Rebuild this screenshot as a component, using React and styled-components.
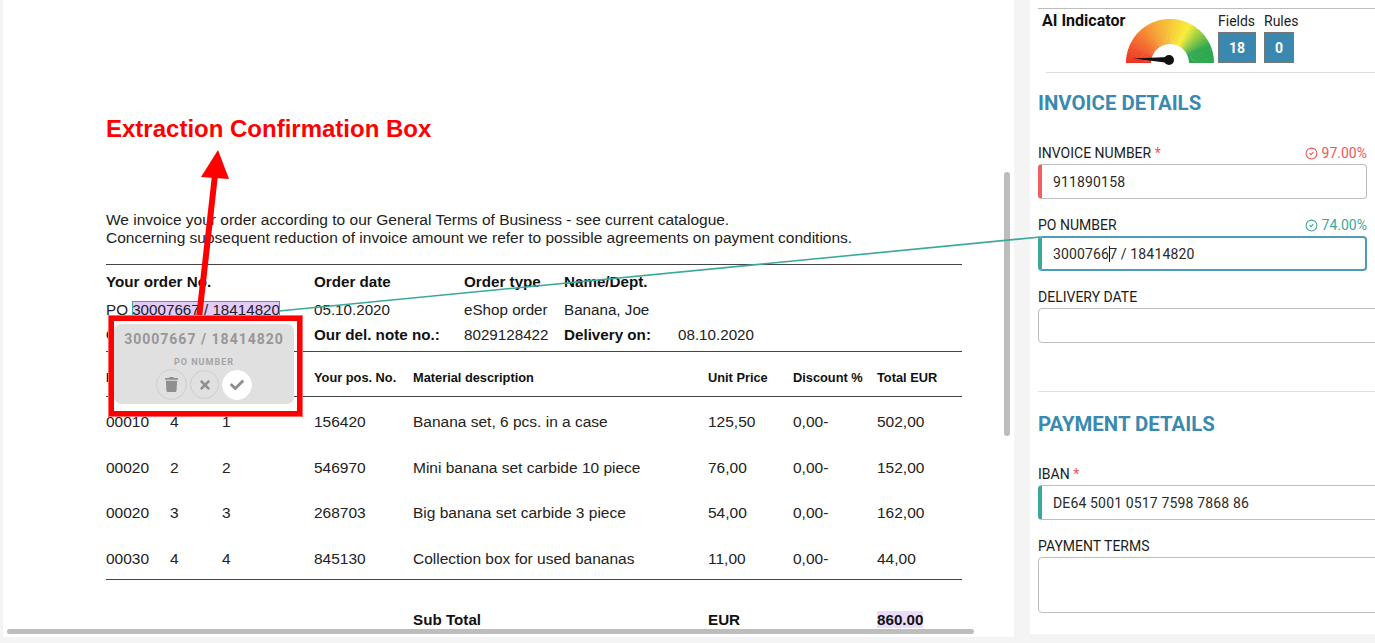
import React from "react";
import styled, { createGlobalStyle } from "styled-components";
import { CircleCheck } from "lucide-react";
import { FaCheck, FaTimes, FaTrash } from "react-icons/fa";

const GlobalStyle = createGlobalStyle`
  html, body {
    margin: 0;
    padding: 0;
    background: #f4f4f4;
    overflow: hidden;
  }
  * { box-sizing: border-box; }
`;

const Page = styled.div`
  position: relative;
  display: flex;
  align-items: flex-start;
  gap: 16px;
  width: 1375px;
  height: 643px;
  padding-left: 3px;
  overflow: hidden;
  background: #f4f4f4;
`;

const Doc = styled.div`
  flex: none;
  width: 1011px;
  height: 637px;
  padding: 117px 52px 0 103px;
  overflow: hidden;
  background: #fff;
  color: #222;
  font-family: "Liberation Sans", Arial, sans-serif;
  font-size: 15.5px;
`;

const Callout = styled.h2`
  margin: 0 0 71px;
  height: 23px;
  font-size: 24px;
  line-height: 23px;
  font-weight: 700;
  color: #fe0000;
`;

const Intro = styled.p`
  margin: 0 0 17px;
  font-size: 15.5px;
  line-height: 18px;
  white-space: nowrap;
`;

const OrderBlock = styled.div`
  border-top: 1px solid #444;
  border-bottom: 1px solid #444;
  height: 88px;
  padding-top: 4px;
  font-size: 15.2px;
`;

const OrderRow = styled.div`
  display: grid;
  grid-template-columns: 208px 150px 100px 114px 1fr;
  height: ${({ $h }) => $h}px;
  align-items: center;
  white-space: nowrap;
`;

const Strong = styled.span`
  font-weight: 700;
  color: #111;
`;

const Marked = styled.span`
  background: #e3cbfb;
  outline: 1px solid #3aa99a;
  outline-offset: -1px;
`;

const TableHead = styled.div`
  display: grid;
  grid-template-columns: 64px 52px 92px 99px 295px 85px 84px 1fr;
  height: 45px;
  padding-top: 6px;
  align-items: center;
  border-bottom: 1px solid #444;
  font-size: 12.8px;
  font-weight: 700;
  color: #111;
  white-space: nowrap;
`;

const ItemRow = styled.div`
  display: grid;
  grid-template-columns: 64px 52px 92px 99px 295px 85px 84px 1fr;
  height: 45.5px;
  align-items: center;
  white-space: nowrap;
`;

const ItemList = styled.div`
  padding-top: 2.5px;
  height: 183px;
  border-bottom: 1px solid #444;
`;

const TotalRow = styled(ItemRow)`
  margin-top: 17px;
  font-size: 15.2px;
  font-weight: 700;
  color: #111;
`;

const TotalMark = styled.span`
  background: #eadcfb;
`;

const ScrollX = styled.div`
  position: absolute;
  left: 7px;
  top: 629px;
  width: 967px;
  height: 5px;
  border-radius: 3px;
  background: #bdbdbd;
`;

const ScrollY = styled.div`
  position: absolute;
  left: 1004px;
  top: 172px;
  width: 6px;
  height: 264px;
  border-radius: 3px;
  background: #bdbdbd;
`;

const Overlay = styled.svg`
  position: absolute;
  left: 0;
  top: 0;
  pointer-events: none;
`;

const RedBox = styled.div`
  position: absolute;
  left: 108px;
  top: 315px;
  width: 195px;
  height: 102px;
  padding: 3px 3px 7px 0;
  border: 6px solid #fe0000;
  outline: 1px solid #ff6a6a;
  outline-offset: -1px;
`;

const Popup = styled.div`
  display: flex;
  flex-direction: column;
  align-items: center;
  height: 80px;
  padding-top: 7px;
  border-radius: 7px;
  background: #e0e0e0;
  font-family: Roboto, sans-serif;
  color: #979797;
`;

const PopupValue = styled.div`
  font-size: 14px;
  line-height: 16px;
  font-weight: 700;
  letter-spacing: 1px;
  white-space: nowrap;
`;

const PopupLabel = styled.div`
  margin-top: 10px;
  font-size: 9px;
  line-height: 10px;
  font-weight: 700;
  letter-spacing: 1px;
  color: #a5a5a5;
`;

const PopupActions = styled.div`
  display: flex;
  align-items: center;
  gap: 3px;
  margin-top: 2px;
`;

const RoundButton = styled.button`
  display: flex;
  align-items: center;
  justify-content: center;
  width: ${({ $size }) => $size}px;
  height: ${({ $size }) => $size}px;
  padding: 0;
  border-radius: 50%;
  border: 1px solid ${({ $light }) => ($light ? "#fff" : "#cecece")};
  background: ${({ $light }) => ($light ? "#fff" : "transparent")};
  color: #8f8f8f;
`;

const Panel = styled.div`
  flex: none;
  width: 345px;
  height: 634px;
  padding: 8px 0 0 8px;
  overflow: hidden;
  background: #fff;
  font-family: Roboto, sans-serif;
  color: #1c1c1c;
`;

const TopRule = styled.div`
  height: 1px;
  background: #bdbdbd;
`;

const Indicator = styled.div`
  display: flex;
  align-items: flex-start;
  height: 64px;
  margin-left: 8px;
  border-bottom: 1px solid #ddd;
  padding-top: 4px;
`;

const IndicatorTitle = styled.div`
  width: 84px;
  margin-left: -4px;
  font-size: 16px;
  line-height: 16px;
  font-weight: 700;
  color: #111;
`;

const Gauge = styled.svg`
  flex: none;
  margin: 6px 4px 0 0;
`;

const Stat = styled.div`
  display: flex;
  flex-direction: column;
  margin-right: 8px;
`;

const StatLabel = styled.div`
  font-size: 14px;
  line-height: 17px;
  height: 19px;
  color: #222;
`;

const StatValue = styled.div`
  display: flex;
  align-items: center;
  justify-content: center;
  width: ${({ $w }) => $w}px;
  height: 31px;
  border: 1px solid #777;
  background: #3a88b0;
  color: #fff;
  font-size: 14px;
  font-weight: 700;
`;

const SectionTitle = styled.h3`
  margin: ${({ $top }) => $top}px 0 ${({ $bottom }) => $bottom}px;
  font-size: 20.4px;
  line-height: 24px;
  font-weight: 700;
  color: #3a8ab0;
`;

const LabelRow = styled.div`
  display: flex;
  justify-content: space-between;
  width: 329px;
  height: 17px;
  margin-bottom: 3px;
  font-size: 14px;
  line-height: 19px;
  color: #1c1c1c;
  white-space: nowrap;
`;

const Star = styled.span`
  color: #f25555;
`;

const Score = styled.span`
  display: flex;
  align-items: center;
  gap: 4px;
  height: 19px;
  color: ${({ $color }) => $color};
`;

const Input = styled.div`
  display: flex;
  align-items: center;
  width: ${({ $wide }) => ($wide ? "345px" : "329px")};
  height: ${({ $h }) => $h || 35}px;
  margin-bottom: ${({ $mb }) => ($mb === undefined ? 16 : $mb)}px;
  padding-left: 11px;
  border: 1px solid ${({ $focus }) => ($focus ? "#4f9db5" : "#bdbdbd")};
  border-width: ${({ $focus }) => ($focus ? "2px" : "1px")};
  border-left: ${({ $bar }) => ($bar ? `4px solid ${$bar}` : "1px solid #bdbdbd")};
  border-radius: 4px;
  font-size: 14px;
  letter-spacing: 0.15px;
  color: #2a2a2a;
  white-space: pre;
`;

const Caret = styled.span`
  display: inline-block;
  width: 1px;
  height: 16px;
  margin-right: -1px;
  background: #111;
  vertical-align: -3px;
`;

const Divider = styled.div`
  height: 1px;
  background: #e0e0e0;
  margin-top: 48px;
`;

const items = [
  ["00010", "4", "1", "156420", "Banana set, 6 pcs. in a case", "125,50", "0,00-", "502,00"],
  ["00020", "2", "2", "546970", "Mini banana set carbide 10 piece", "76,00", "0,00-", "152,00"],
  ["00020", "3", "3", "268703", "Big banana set carbide 3 piece", "54,00", "0,00-", "162,00"],
  ["00030", "4", "4", "845130", "Collection box for used bananas", "11,00", "0,00-", "44,00"],
];

const stops = [
  [0, [238, 48, 36]],
  [0.35, [247, 160, 58]],
  [0.65, [248, 238, 58]],
  [0.87, [47, 168, 79]],
  [1, [47, 168, 79]],
];

const gaugeColor = (t) => {
  let i = 0;
  while (i < stops.length - 2 && t > stops[i + 1][0]) i++;
  const [t0, c0] = stops[i];
  const [t1, c1] = stops[i + 1];
  const k = (t - t0) / (t1 - t0);
  return `rgb(${c0.map((c, n) => Math.round(c + (c1[n] - c) * k)).join(",")})`;
};

const segment = (t0, t1) => {
  const cx = 44, cy = 44, R = 44, r = 19;
  const pt = (rad, t) => {
    const a = Math.PI * (1 - t);
    return `${(cx + rad * Math.cos(a)).toFixed(2)} ${(cy - rad * Math.sin(a)).toFixed(2)}`;
  };
  return `M${pt(R, t0)} A${R} ${R} 0 0 1 ${pt(R, t1)} L${pt(r, t1)} A${r} ${r} 0 0 0 ${pt(r, t0)} Z`;
};

const segments = Array.from({ length: 60 }, (_, i) => i);

const GaugeChart = () => (
  <Gauge width="88" height="50" viewBox="0 0 88 50">
    {segments.map((i) => (
      <path
        key={i}
        d={segment(i / 60, (i + 1.3) / 60 > 1 ? 1 : (i + 1.3) / 60)}
        fill={gaugeColor((i + 0.5) / 60)}
      />
    ))}
    <path d="M7 39.5 L42 38 L43 44 Z" fill="#111" />
    <circle cx="43" cy="41" r="5" fill="#111" />
  </Gauge>
);

const App = () => {
  return (
    <Page>
      <GlobalStyle />
      <Doc>
        <Callout>Extraction Confirmation Box</Callout>
        <Intro>
          We invoice your order according to our General Terms of Business - see current catalogue.
          <br />
          Concerning subsequent reduction of invoice amount we refer to possible agreements on payment conditions.
        </Intro>
        <OrderBlock>
          <OrderRow $h={24}>
            <Strong>Your order No.</Strong>
            <Strong>Order date</Strong>
            <Strong>Order type</Strong>
            <Strong>Name/Dept.</Strong>
          </OrderRow>
          <OrderRow $h={33}>
            <span>
              PO <Marked>30007667 / 18414820</Marked>
            </span>
            <span>05.10.2020</span>
            <span>eShop order</span>
            <span>Banana, Joe</span>
          </OrderRow>
          <OrderRow $h={16}>
            <Strong>Customer No.</Strong>
            <Strong>Our del. note no.:</Strong>
            <span>8029128422</span>
            <Strong>Delivery on:</Strong>
            <span>08.10.2020</span>
          </OrderRow>
        </OrderBlock>
        <TableHead>
          <span>Pos.</span>
          <span>Qty</span>
          <span>Unit</span>
          <span>Your pos. No.</span>
          <span>Material description</span>
          <span>Unit Price</span>
          <span>Discount %</span>
          <span>Total EUR</span>
        </TableHead>
        <ItemList>
          {items.map((row) => (
            <ItemRow key={row[3]}>
              {row.map((cell, i) => (
                <span key={i}>{cell}</span>
              ))}
            </ItemRow>
          ))}
        </ItemList>
        <TotalRow>
          <span />
          <span />
          <span />
          <span />
          <span>Sub Total</span>
          <span>EUR</span>
          <span />
          <span>
            <TotalMark>860.00</TotalMark>
          </span>
        </TotalRow>
      </Doc>

      <Panel>
        <TopRule />
        <Indicator>
          <IndicatorTitle>AI Indicator</IndicatorTitle>
          <GaugeChart />
          <Stat>
            <StatLabel>Fields</StatLabel>
            <StatValue $w={38}>18</StatValue>
          </Stat>
          <Stat>
            <StatLabel>Rules</StatLabel>
            <StatValue $w={30}>0</StatValue>
          </Stat>
        </Indicator>
        <SectionTitle $top={18} $bottom={29}>INVOICE DETAILS</SectionTitle>
        <LabelRow>
          <span>
            INVOICE NUMBER <Star>*</Star>
          </span>
          <Score $color="#f25555">
            <CircleCheck size={13} strokeWidth={2} /> 97.00%
          </Score>
        </LabelRow>
        <Input $bar="#f25e5e" $mb={17}>911890158</Input>
        <LabelRow>
          <span>PO NUMBER</span>
          <Score $color="#3aa99a">
            <CircleCheck size={13} strokeWidth={2} /> 74.00%
          </Score>
        </LabelRow>
        <Input $bar="#3aa99a" $focus $mb={17}>
          <span>
            3000766<Caret />7 / 18414820
          </span>
        </Input>
        <LabelRow>
          <span>DELIVERY DATE</span>
        </LabelRow>
        <Input $wide $mb={0} />
        <Divider />
        <SectionTitle $top={20} $bottom={29}>PAYMENT DETAILS</SectionTitle>
        <LabelRow>
          <span>
            IBAN <Star>*</Star>
          </span>
        </LabelRow>
        <Input $wide $bar="#3aa99a" $mb={17}>DE64 5001 0517 7598 7868 86</Input>
        <LabelRow>
          <span>PAYMENT TERMS</span>
        </LabelRow>
        <Input $wide $h={56} $mb={0} />
      </Panel>

      <ScrollX />
      <ScrollY />

      <Overlay width="1375" height="643" viewBox="0 0 1375 643">
        <line x1="279" y1="311" x2="1040" y2="237" stroke="#3aa99a" strokeWidth="1.6" />
        <line x1="199" y1="318" x2="215" y2="175" stroke="#fe0000" strokeWidth="6" />
        <polygon points="218,150 201,177 229,179" fill="#fe0000" />
      </Overlay>

      <RedBox>
        <Popup>
          <PopupValue>30007667 / 18414820</PopupValue>
          <PopupLabel>PO NUMBER</PopupLabel>
          <PopupActions>
            <RoundButton $size={31}>
              <FaTrash size={15} />
            </RoundButton>
            <RoundButton $size={29}>
              <FaTimes size={14} />
            </RoundButton>
            <RoundButton $size={30} $light>
              <FaCheck size={14} />
            </RoundButton>
          </PopupActions>
        </Popup>
      </RedBox>
    </Page>
  );
};

export default App;
